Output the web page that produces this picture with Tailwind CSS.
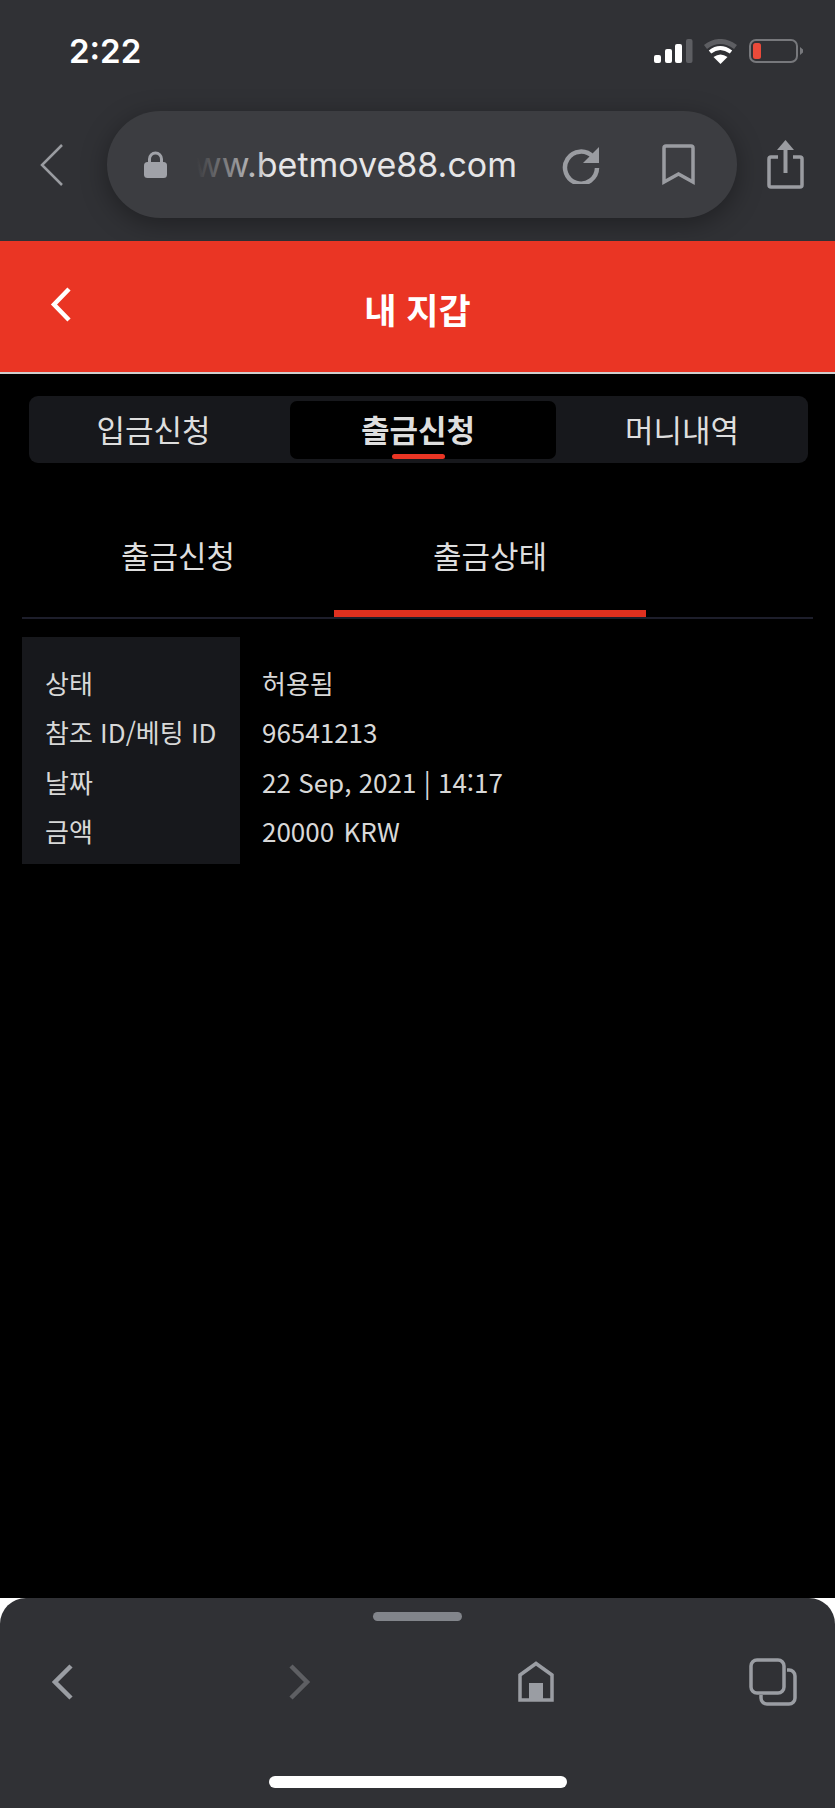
<!DOCTYPE html>
<html lang="ko">
<head>
<meta charset="utf-8">
<script src="https://cdn.jsdelivr.net/npm/@tailwindcss/browser@4"></script>
</head>
<body class="bg-white">
<div class="w-[835px] h-[1808px] flex flex-col overflow-hidden bg-white font-['Noto_Sans_CJK_KR','Noto_Sans',sans-serif]">

  <div class="h-[241px] shrink-0 bg-[#303135] flex flex-col">
    <div class="h-[111px] shrink-0 flex items-start justify-between pl-[69px] pr-[32px] pt-[32px]">
      <span class="font-['Inter',sans-serif] font-semibold text-[33px] leading-[38px] text-white">2:22</span>
      <svg class="mt-[7px]" width="149" height="25" viewBox="0 0 149 25" fill="none">
        <rect x="0" y="16" width="7" height="8" rx="2" fill="#fff"/>
        <rect x="11" y="10" width="7" height="14" rx="2" fill="#fff"/>
        <rect x="21" y="5" width="7" height="19" rx="2" fill="#fff"/>
        <rect x="32" y="0" width="6.500" height="24" rx="2" fill="#5d5e62"/>
        <path d="M51.500 8 Q66 -3 81.500 8" stroke="#5d5e62" stroke-width="5" fill="none"/>
        <path d="M56 13 Q66 5 77 13" stroke="#fff" stroke-width="4" fill="none"/>
        <path d="M66.500 25 L59.500 18 Q66.500 13 73.500 18 Z" fill="#fff"/>
        <rect x="96" y="1" width="47" height="22" rx="6" stroke="#77787c" stroke-width="2" fill="none"/>
        <rect x="99" y="4" width="8" height="16" rx="2.500" fill="#ea4a3a"/>
        <path d="M146 8 L149 10.500 L149 13.500 L146 16 Z" fill="#77787c"/>
      </svg>
    </div>
    <div class="flex items-center h-[107px] pl-[40px]">
      <svg width="23" height="42" viewBox="0 0 23 42" fill="none" class="shrink-0"><path d="M22 1 L2 21 L22 41" stroke="#9a9ca1" stroke-width="2.500"/></svg>
      <div class="ml-[44px] w-[630px] h-[107px] shrink-0 rounded-[54px] bg-[#3c3d41] shadow-[0_6px_26px_rgba(0,0,0,0.35)] flex items-center pl-[37px]">
        <svg width="23" height="27" viewBox="0 0 23 27" class="shrink-0"><path d="M5.500 12 V8 a6 6 0 0 1 12 0 V12" stroke="#a0a2a8" stroke-width="3" fill="none"/><rect x="0" y="11" width="23" height="16" rx="3.500" fill="#a0a2a8"/></svg>
        <div class="relative ml-[30px] w-[320px] h-[50px] overflow-hidden flex justify-end items-center shrink-0">
          <span class="font-['Inter',sans-serif] text-[34px] leading-[50px] text-[#e6e6e8] whitespace-nowrap">www.betmove88.com</span>
          <div class="absolute left-0 top-0 h-full w-[76px] bg-linear-to-r from-[#3c3d41] to-transparent"></div>
        </div>
        <svg class="ml-[45px] shrink-0" width="38" height="38" viewBox="0 0 38 38" fill="none"><path d="M31 11 A16 16 0 1 0 35 22" stroke="#9a9ca1" stroke-width="4.500"/><path d="M37 1 V17 H21 Z" fill="#9a9ca1"/></svg>
        <svg class="ml-[62px] shrink-0" width="33" height="41" viewBox="0 0 33 41" fill="none"><path d="M2 38 V4 a2 2 0 0 1 2 -2 H29 a2 2 0 0 1 2 2 V38 L16.500 30 Z" stroke="#9a9ca1" stroke-width="3.500"/></svg>
      </div>
      <svg class="ml-[30px] shrink-0" width="37" height="49" viewBox="0 0 37 49" fill="none"><path d="M11 17 H4 a2 2 0 0 0 -2 2 V45 a2 2 0 0 0 2 2 H33 a2 2 0 0 0 2 -2 V19 a2 2 0 0 0 -2 -2 H26" stroke="#9a9ca1" stroke-width="3.500"/><path d="M18.500 33 V4" stroke="#9a9ca1" stroke-width="4"/><path d="M18.500 0 L27 10 H10 Z" fill="#9a9ca1"/></svg>
    </div>
  </div>

  <div class="h-[131px] shrink-0 bg-[#ea3524] relative flex items-center justify-center">
    <svg class="absolute left-[50px] top-[46px]" width="22" height="35" viewBox="0 0 22 35" fill="none"><path d="M19 2 L4 17.500 L19 33" stroke="#fff" stroke-width="4.500"/></svg>
    <span class="text-white font-bold text-[35px] leading-none mt-[4px]">내 지갑</span>
  </div>
  <div class="h-[2px] shrink-0 bg-[#cfcfcf]"></div>

  <div class="flex-1 bg-black px-[22px] pt-[22px] flex flex-col">
    <div class="mx-[7px] w-[779px] h-[67px] rounded-[9px] bg-[#17181c] flex items-center text-[#dedede] text-[31px]">
      <div class="w-[249px] mr-[12px] text-center">입금신청</div>
      <div class="relative w-[266px] h-[58px] rounded-[7px] bg-black flex items-center justify-center font-bold pr-[10px]">
        출금신청
        <div class="absolute bottom-[0px] left-[102px] w-[53px] h-[5px] rounded-full bg-[#ea3524]"></div>
      </div>
      <div class="flex-1 text-center">머니내역</div>
    </div>

    <div class="mt-[70px] h-[84px] relative flex text-[#dedede] text-[31px] leading-[44px]">
      <div class="w-[312px] text-center">출금신청</div>
      <div class="w-[312px] text-center">출금상태</div>
    </div>
    <div class="h-[2px] w-[791px] bg-[#1d1e2b] relative">
      <div class="absolute left-[312px] -top-[7px] w-[312px] h-[7px] bg-[#e0301f]"></div>
    </div>

    <div class="mt-[18px] flex text-[#d8d8d8] text-[26px] font-normal leading-[49.300px]">
      <div class="w-[218px] h-[227px] bg-[#17181c] pl-[23px] pt-[21px] shrink-0">
        <div>상태</div>
        <div class="whitespace-nowrap">참조 ID/베팅 ID</div>
        <div>날짜</div>
        <div>금액</div>
      </div>
      <div class="pl-[22px] pt-[21px]">
        <div>허용됨</div>
        <div>96541213</div>
        <div class="whitespace-nowrap">22 Sep, 2021 | 14:17</div>
        <div class="[word-spacing:2px]">20000 KRW</div>
      </div>
    </div>
  </div>

  <div class="h-[210px] shrink-0 bg-white">
    <div class="h-full rounded-t-[26px] bg-[#303135] flex flex-col items-center pt-[14px]">
      <div class="w-[89px] h-[9px] rounded-full bg-[#82858b]"></div>
      <div class="w-full flex items-start pl-[52px] mt-[36px] h-[50px]">
        <svg class="mt-[7px] shrink-0" width="21" height="36" viewBox="0 0 21 36" fill="none"><path d="M19 2 L3 18 L19 34" stroke="#9a9da3" stroke-width="4.500"/></svg>
        <svg class="ml-[216px] mt-[7px] shrink-0" width="22" height="36" viewBox="0 0 22 36" fill="none"><path d="M2 2 L18 18 L2 34" stroke="#5e5f63" stroke-width="4.500"/></svg>
        <svg class="ml-[207px] mt-[4px] shrink-0" width="36" height="41" viewBox="0 0 36 41" fill="none"><path d="M2 39 V14 L18 2.500 L34 14 V39 Z" stroke="#9a9da3" stroke-width="3.500"/><rect x="11" y="22" width="14" height="18" fill="#9a9da3"/></svg>
        <svg class="ml-[195px] mt-[1px] shrink-0" width="48" height="48" viewBox="0 0 48 48" fill="none"><rect x="2" y="2" width="33" height="33" rx="6" stroke="#9a9da3" stroke-width="3.500"/><path d="M38 12 H40 a6 6 0 0 1 6 6 V40 a6 6 0 0 1 -6 6 H18 a6 6 0 0 1 -6 -6 V37" stroke="#9a9da3" stroke-width="3.500"/></svg>
      </div>
      <div class="mt-[69px] w-[298px] h-[12px] rounded-full bg-white"></div>
    </div>
  </div>
</div>
</body>
</html>
